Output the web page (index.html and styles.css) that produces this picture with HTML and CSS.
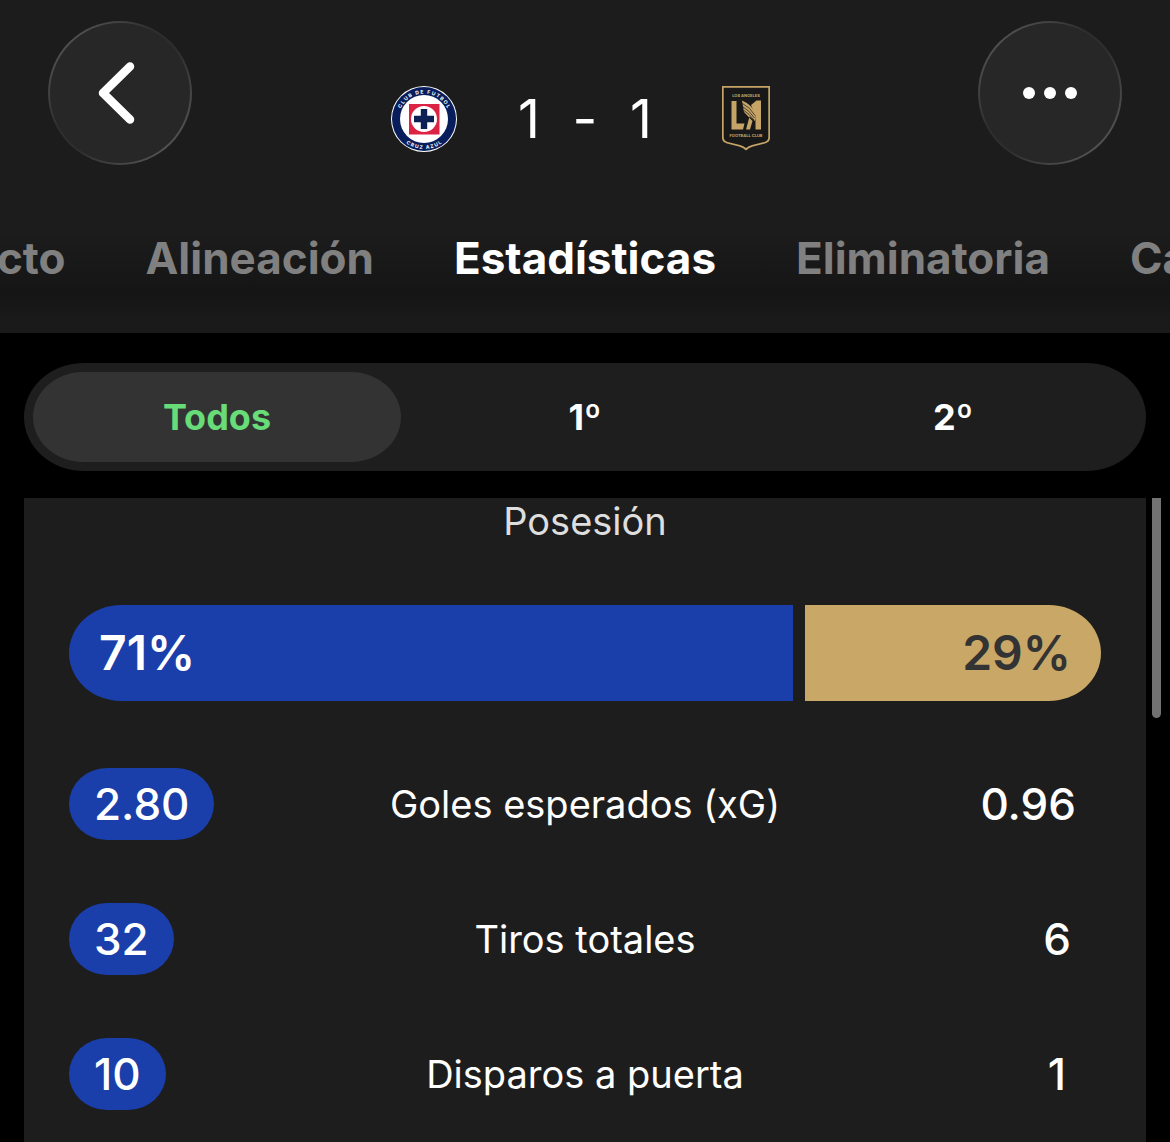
FILE: index.html
```html
<!DOCTYPE html>
<html lang="es">
<head>
<meta charset="utf-8">
<meta name="viewport" content="width=device-width, initial-scale=1">
<title>Cruz Azul 1 - 1 LAFC</title>
<link rel="stylesheet" href="styles.css">
</head>
<body>
<header class="header">
  <div class="topbar">
    <button class="round-button" type="button" aria-label="Atrás">
      <svg width="144" height="144" viewBox="0 0 144 144" aria-hidden="true"><path d="M82 45.500 55 72l27 26.500" fill="none" stroke="#fff" stroke-width="8.500" stroke-linecap="round" stroke-linejoin="round"/></svg>
    </button>
    <div class="match">
      <svg class="crest" viewBox="0 0 66 66" role="img" aria-label="Cruz Azul">
        <defs>
          <path id="arc-top" d="M33 58.500A25.500 25.500 0 0 1 33 7.500A25.500 25.500 0 0 1 33 58.500"/>
          <path id="arc-bottom" d="M33 3A30 30 0 0 0 33 63A30 30 0 0 0 33 3"/>
        </defs>
        <circle cx="33" cy="33" r="33" fill="#fff"/>
        <circle cx="33" cy="33" r="32" fill="#071d5c"/>
        <circle cx="33" cy="33" r="24" fill="#fff"/>
        <path fill="#dd2344" d="M18 18h30.500v30.500H18z"/>
        <circle cx="33" cy="33" r="13" fill="#fff"/>
        <path fill="#0b2054" d="M29.800 23h6.400v6.800H43v6.400h-6.800V43h-6.400v-6.800H23v-6.400h6.800z"/>
        <text class="crest-ring"><textPath href="#arc-top" startOffset="50%">C L U B&#160; &#160;D E&#160; &#160;F U T B O L</textPath></text>
        <text class="crest-ring"><textPath href="#arc-bottom" startOffset="50%">C R U Z&#160; &#160;A Z U L</textPath></text>
      </svg>
      <p class="score"><span>1</span><span>-</span><span>1</span></p>
      <svg class="crest" viewBox="0 1 66 66" role="img" aria-label="LAFC">
        <path fill="#c6a467" d="M9 0h48v53q0 4-5 5.500L40 61.500q-4 1-7 4-3-3-7-4l-12-3Q9 57 9 53z"/>
        <path fill="#181818" d="M10.700 2.700h44.600V52q0 4-4 5L39 60q-3.500 1-6 3-2.500-2-6-3l-12.300-3q-4-1-4-5z"/>
        <text class="crest-name" x="33" y="12">LOS ANGELES</text>
        <text class="crest-name" x="33" y="52">FOOTBALL CLUB</text>
        <path fill="#c6a467" d="M18.500 16h5v22.500h8l-1.500 6H18.500zM38 20l5.500-4.500H48v29h-5.500V31z"/>
        <path fill="#c6a467" d="M29 15.500q9 4 12 10.500 2.500 5 1 10l-5.500-4.500L33 44.500h4l2.500-8.500L31 27z"/>
        <path fill="none" stroke="#181818" stroke-width=".7" d="M29.500 18.500q8 4 12.500 12M30 22q6 3 11.500 11M31 25.500q5 3 10 9.500"/>
      </svg>
    </div>
    <button class="round-button" type="button" aria-label="Más opciones">
      <svg width="144" height="144" viewBox="0 0 144 144" aria-hidden="true" fill="#fff"><circle cx="51" cy="72" r="6"/><circle cx="72" cy="72" r="6"/><circle cx="93" cy="72" r="6"/></svg>
    </button>
  </div>
  <nav class="tabs" aria-label="Secciones">
    <div class="tab-group tab-group-before">
      <a class="tab" href="#directo">Directo</a>
      <a class="tab" href="#alineacion">Alineación</a>
    </div>
    <a class="tab tab-active" href="#estadisticas" aria-current="page">Estadísticas</a>
    <div class="tab-group">
      <a class="tab" href="#eliminatoria">Eliminatoria</a>
      <a class="tab" href="#cara-a-cara">Cara a cara</a>
    </div>
  </nav>
</header>
<main class="content" id="estadisticas">
  <div class="periods" role="group" aria-label="Periodo">
    <button class="period period-active" type="button" aria-pressed="true">Todos</button>
    <button class="period" type="button" aria-pressed="false">1º</button>
    <button class="period" type="button" aria-pressed="false">2º</button>
  </div>
  <section class="panel">
    <h2 class="panel-title">Posesión</h2>
    <div class="possession" style="grid-template-columns: 71fr 29fr">
      <div class="share share-home">71%</div>
      <div class="share share-away">29%</div>
    </div>
    <table class="stats">
      <tbody>
        <tr><td><span class="value value-best">2.80</span></td><th scope="row">Goles esperados (xG)</th><td><span class="value">0.96</span></td></tr>
        <tr><td><span class="value value-best">32</span></td><th scope="row">Tiros totales</th><td><span class="value">6</span></td></tr>
        <tr><td><span class="value value-best">10</span></td><th scope="row">Disparos a puerta</th><td><span class="value">1</span></td></tr>
      </tbody>
    </table>
    <div class="scroll-thumb"></div>
  </section>
</main>
</body>
</html>
```
FILE: styles.css
```css
* {
  box-sizing: border-box;
}

body {
  display: flex;
  flex-direction: column;
  min-height: 100vh;
  margin: 0;
  background: #000;
  color: #fff;
  font-family: Inter, "Liberation Sans", sans-serif;
}

button {
  border: 0;
  padding: 0;
  background: none;
  color: inherit;
  font: inherit;
  cursor: pointer;
}

/* Header */
.header {
  padding: 21px 0 45px;
  background: linear-gradient(#1c1c1c 70%, #151515 88%, #1a1a1a 96%);
}

.topbar {
  display: flex;
  justify-content: space-between;
  padding: 0 48px;
}

.round-button {
  width: 144px;
  height: 144px;
  border: 2px solid transparent;
  border-radius: 50%;
  background:
    linear-gradient(#272728, #272728) padding-box,
    linear-gradient(135deg, #626262, #2e2e2e 40%, #2e2e2e 55%, #626262) border-box;
}

.round-button svg {
  display: block;
  margin: -2px;
}

.match {
  display: flex;
  align-items: center;
  gap: 61px;
  height: 66px;
  margin-top: 65px;
}

.crest {
  width: 66px;
  height: 66px;
}

.crest-ring {
  fill: #fff;
  font-size: 5px;
  font-weight: 700;
  text-anchor: middle;
}

.crest-name {
  fill: #c6a467;
  font-size: 4px;
  font-weight: 700;
  text-anchor: middle;
}

.score {
  display: flex;
  justify-content: space-between;
  width: 134px;
  margin: 0;
  font-size: 54px;
  line-height: 66px;
}

.tabs {
  display: grid;
  grid-template-columns: 1fr auto 1fr;
  gap: 80px;
  margin-top: 63px;
  overflow: hidden;
}

.tab-group {
  display: flex;
  gap: 80px;
  min-width: 0;
}

.tab-group-before {
  justify-content: flex-end;
}

.tab {
  color: #808080;
  font-size: 44px;
  font-weight: 700;
  line-height: 60px;
  text-decoration: none;
  white-space: nowrap;
}

.tab-active {
  color: #fff;
}

/* Content */
.content {
  display: flex;
  flex: 1;
  flex-direction: column;
  padding: 30px 24px 0;
}

.periods {
  display: grid;
  grid-template-columns: repeat(3, 1fr);
  padding: 9px;
  border-radius: 60px / 54px;
  background: #1e1e1e;
}

.period {
  height: 90px;
  border-radius: 50px / 45px;
  font-size: 36px;
  font-weight: 700;
}

.period-active {
  background: #333;
  color: #67dc78;
}

.panel {
  position: relative;
  flex: 1;
  margin-top: 27px;
  padding: 0 45px 32px;
  background: #1d1d1d;
}

.panel-title {
  margin: 0;
  color: #dedede;
  font-size: 38px;
  font-weight: 400;
  line-height: 46px;
  text-align: center;
}

.possession {
  display: grid;
  gap: 12px;
  margin-top: 61px;
  font-size: 48px;
  font-weight: 600;
  line-height: 96px;
}

.share {
  padding: 0 30px;
}

.share-home {
  border-radius: 52px 0 0 52px / 48px 0 0 48px;
  background: #1a3faa;
}

.share-away {
  border-radius: 0 52px 52px 0 / 0 48px 48px 0;
  background: #c9a767;
  color: #333;
  text-align: right;
}

.stats {
  width: 100%;
  margin-top: 35px;
  border-collapse: collapse;
  table-layout: fixed;
}

.stats td,
.stats th {
  height: 135px;
  padding: 0;
  vertical-align: middle;
}

.stats th {
  width: 50%;
  font-size: 38px;
  font-weight: 400;
}

.stats td:last-child {
  text-align: right;
}

.value {
  display: inline-block;
  min-width: 88px;
  padding: 0 25px;
  border-radius: 38px / 36px;
  font-size: 44px;
  font-weight: 500;
  line-height: 72px;
  text-align: center;
}

.value-best {
  background: #1a3faa;
}

.scroll-thumb {
  position: absolute;
  top: 0;
  right: -15px;
  width: 9px;
  height: 220px;
  border-radius: 0 0 5px 5px;
  background: #727272;
}
```
